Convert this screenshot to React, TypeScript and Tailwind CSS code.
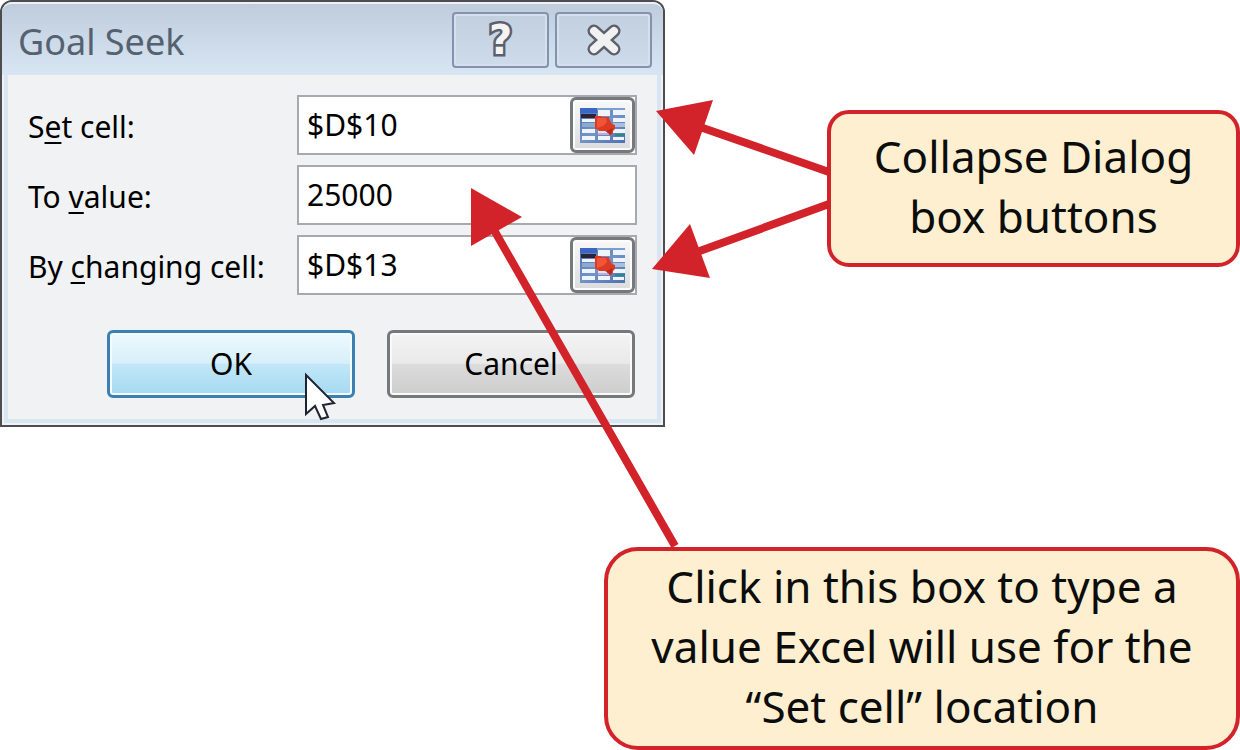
import type { ReactNode } from "react";

function CollapseIcon() {
  return (
    <svg viewBox="0 0 45 35" className="h-[35px] w-[45px]" aria-hidden="true">
      <defs>
        <linearGradient id="grid" x1="0" y1="0" x2="1" y2="1">
          <stop offset="0" stopColor="#4a70b8" />
          <stop offset="0.5" stopColor="#7494c8" />
          <stop offset="1" stopColor="#4a72b4" />
        </linearGradient>
      </defs>
      <rect width="45" height="35" fill="url(#grid)" />
      <rect width="17" height="5" fill="#3c66c4" />
      <rect x="17" width="28" height="2" fill="#7f9ed0" />
      <rect x="1" y="6" width="15" height="4" fill="#2b2436" />
      <g fill="#eef4fb">
        <rect x="18" y="2" width="12" height="6" />
        <rect x="33" y="2" width="12" height="5" />
        <rect x="33" y="10" width="12" height="4" />
        <rect x="2" y="11" width="13" height="3" />
        <rect x="2" y="21" width="13" height="4" />
        <rect x="2" y="28" width="13" height="4" />
        <rect x="18" y="28" width="12" height="4" />
        <rect x="33" y="21" width="12" height="4" />
        <rect x="33" y="29" width="11" height="3" />
      </g>
      <rect x="2" y="15" width="13" height="4" fill="#8ea9ca" />
      <rect x="33" y="15" width="12" height="4" fill="#a9bfdc" />
      <rect x="18" y="21" width="9" height="4" fill="#dbe6f3" />
      <rect x="18" y="25" width="12" height="2" fill="#c7a7d8" />
      <rect x="35" y="26" width="10" height="2" fill="#2b8791" />
      <path
        d="M15 8h6v1h8v2l3 5 3 1v4l-2 2-1 4h-3v-2l-4-2h-6l-2-2h-2z"
        fill="#dc3a22"
      />
      <path d="M17 10h9l1 4-4 4-6 2z" fill="#f0553a" />
      <path d="M33 20l-2 6h-2l-3-3z" fill="#b92a1a" />
    </svg>
  );
}

type FieldProps = {
  id: string;
  label: ReactNode;
  value: string;
  collapsible?: boolean;
};

function Field({ id, label, value, collapsible }: FieldProps) {
  return (
    <div className="flex items-center">
      <label htmlFor={id} className="flex-1 whitespace-nowrap pt-1">
        {label}
      </label>
      <div className="flex h-[60px] w-[340px] border-2 border-[#a7a9ae] bg-white">
        <input
          id={id}
          defaultValue={value}
          className="w-0 min-w-0 flex-1 bg-transparent pl-2 outline-none"
        />
        {collapsible && (
          <button
            type="button"
            aria-label="Collapse dialog"
            className="flex w-[65px] items-center justify-center rounded-md border-[3px] border-[#77787b] bg-linear-to-b from-[#f8f8f8] to-[#dcdcdc] shadow-[inset_0_0_0_2px_#fcfcfc]"
          >
            <CollapseIcon />
          </button>
        )}
      </div>
    </div>
  );
}

function Key({ children }: { children: string }) {
  return <span className="underline decoration-2 underline-offset-4">{children}</span>;
}

const captionButton =
  "flex h-14 w-[97px] items-center justify-center rounded border-2 border-[#8492b1] bg-linear-to-b from-[#c2cfdf] to-[#cddbea] shadow-[inset_0_0_0_2px_#d5e0ec]";

function GoalSeekDialog() {
  return (
    <section
      aria-labelledby="dialog-title"
      className="w-[665px] shrink-0 rounded-t-xl border-2 border-[#4d4d4f] bg-[#d9e5f1] font-['Noto_Sans','Open_Sans',sans-serif] shadow-[inset_0_0_0_2px_#eef2f7]"
    >
      <header className="flex h-[73px] items-center justify-between rounded-t-[10px] border-t-2 border-[#eef2f7] bg-linear-to-b from-[#bfccdc] to-[#d8e6f4] pl-4 pr-[11px]">
        <h1 id="dialog-title" className="pt-1 text-[36px] leading-[48px] text-[#566170]">
          Goal Seek
        </h1>
        <div className="flex gap-[6px]">
          <button type="button" aria-label="Help" className={captionButton}>
            <span className="font-['DejaVu_Sans',sans-serif] text-[40px] font-bold leading-[48px] text-[#f4f4f4] [-webkit-text-stroke:5px_#5b606c] [paint-order:stroke_fill]">
              ?
            </span>
          </button>
          <button type="button" aria-label="Close" className={captionButton}>
            <svg viewBox="0 0 34 32" className="h-8 w-[34px]" aria-hidden="true">
              <g fill="none" strokeLinecap="round">
                <path d="M7 7l20 18M27 7L7 25" stroke="#5b606c" strokeWidth="13" strokeLinecap="round" />
                <path d="M7 7l20 18M27 7L7 25" stroke="#f1f1f1" strokeWidth="8" />
              </g>
            </svg>
          </button>
        </div>
      </header>

      <form className="mx-[6px] mb-[6px] bg-[#f1f2f4] pb-[21px] pl-5 pr-5 pt-5 text-[30px] leading-10 text-black">
        <div className="flex flex-col gap-[10px]">
          <Field id="set-cell" label={<>S<Key>e</Key>t cell:</>} value="$D$10" collapsible />
          <Field id="to-value" label={<>To <Key>v</Key>alue:</>} value="25000" />
          <Field id="by-cell" label={<>By <Key>c</Key>hanging cell:</>} value="$D$13" collapsible />
        </div>
        <div className="mt-[35px] flex justify-end gap-8 pr-[2px]">
          <button
            type="button"
            className="h-[68px] w-[248px] rounded-md border-[3px] border-[#3c7fb1] bg-[linear-gradient(#eff9fe,#d6effa_49%,#c2e7f8_50%,#a5d9f2)] shadow-[inset_0_0_0_2px_#f3fbff]"
          >
            OK
          </button>
          <button
            type="button"
            className="h-[68px] w-[248px] rounded-md border-[3px] border-[#77787b] bg-[linear-gradient(#f4f4f4,#e9e9ea_49%,#dcdcdd_50%,#cdcdce)] shadow-[inset_0_0_0_2px_#fafafa]"
          >
            Cancel
          </button>
        </div>
      </form>
    </section>
  );
}

const callout =
  "border-4 border-[#d2232a] bg-[#feefd0] text-center font-['Noto_Sans','Open_Sans',sans-serif] text-[44px] leading-[60px] text-[#0b0d0d]";

function Annotations() {
  return (
    <svg
      viewBox="0 0 840 560"
      className="pointer-events-none absolute left-0 top-0 h-[560px] w-[840px]"
      aria-hidden="true"
    >
      <g stroke="#d2232a" strokeWidth="8">
        <path d="M829 172L700 127M829 204L697 252M675 546L494 230" />
      </g>
      <g fill="#d2232a">
        <path d="M656 111L713 100L694 155z" />
        <path d="M652 269L690 224L710 278z" />
        <path d="M471 188L522 217L471 246z" />
      </g>
      <path
        d="M306 375V414L315 406L321 419L328 417L323 405L334 403z"
        fill="#fff"
        stroke="#1f2433"
        strokeWidth="2"
      />
    </svg>
  );
}

export default function App() {
  return (
    <main className="relative flex min-h-screen flex-col justify-between bg-white">
      <div className="flex items-start">
        <GoalSeekDialog />
        <aside className={`${callout} ml-[162px] mt-[110px] min-w-[413px] flex-1 rounded-[22px] pb-[17px] pt-3`}>
          Collapse Dialog
          <br />
          box buttons
        </aside>
      </div>
      <aside className={`${callout} ml-[604px] min-w-[636px] rounded-[34px] pb-[10px] pt-[5px]`}>
        Click in this box to type a
        <br />
        value Excel will use for the
        <br />
        “Set cell” location
      </aside>
      <Annotations />
    </main>
  );
}
